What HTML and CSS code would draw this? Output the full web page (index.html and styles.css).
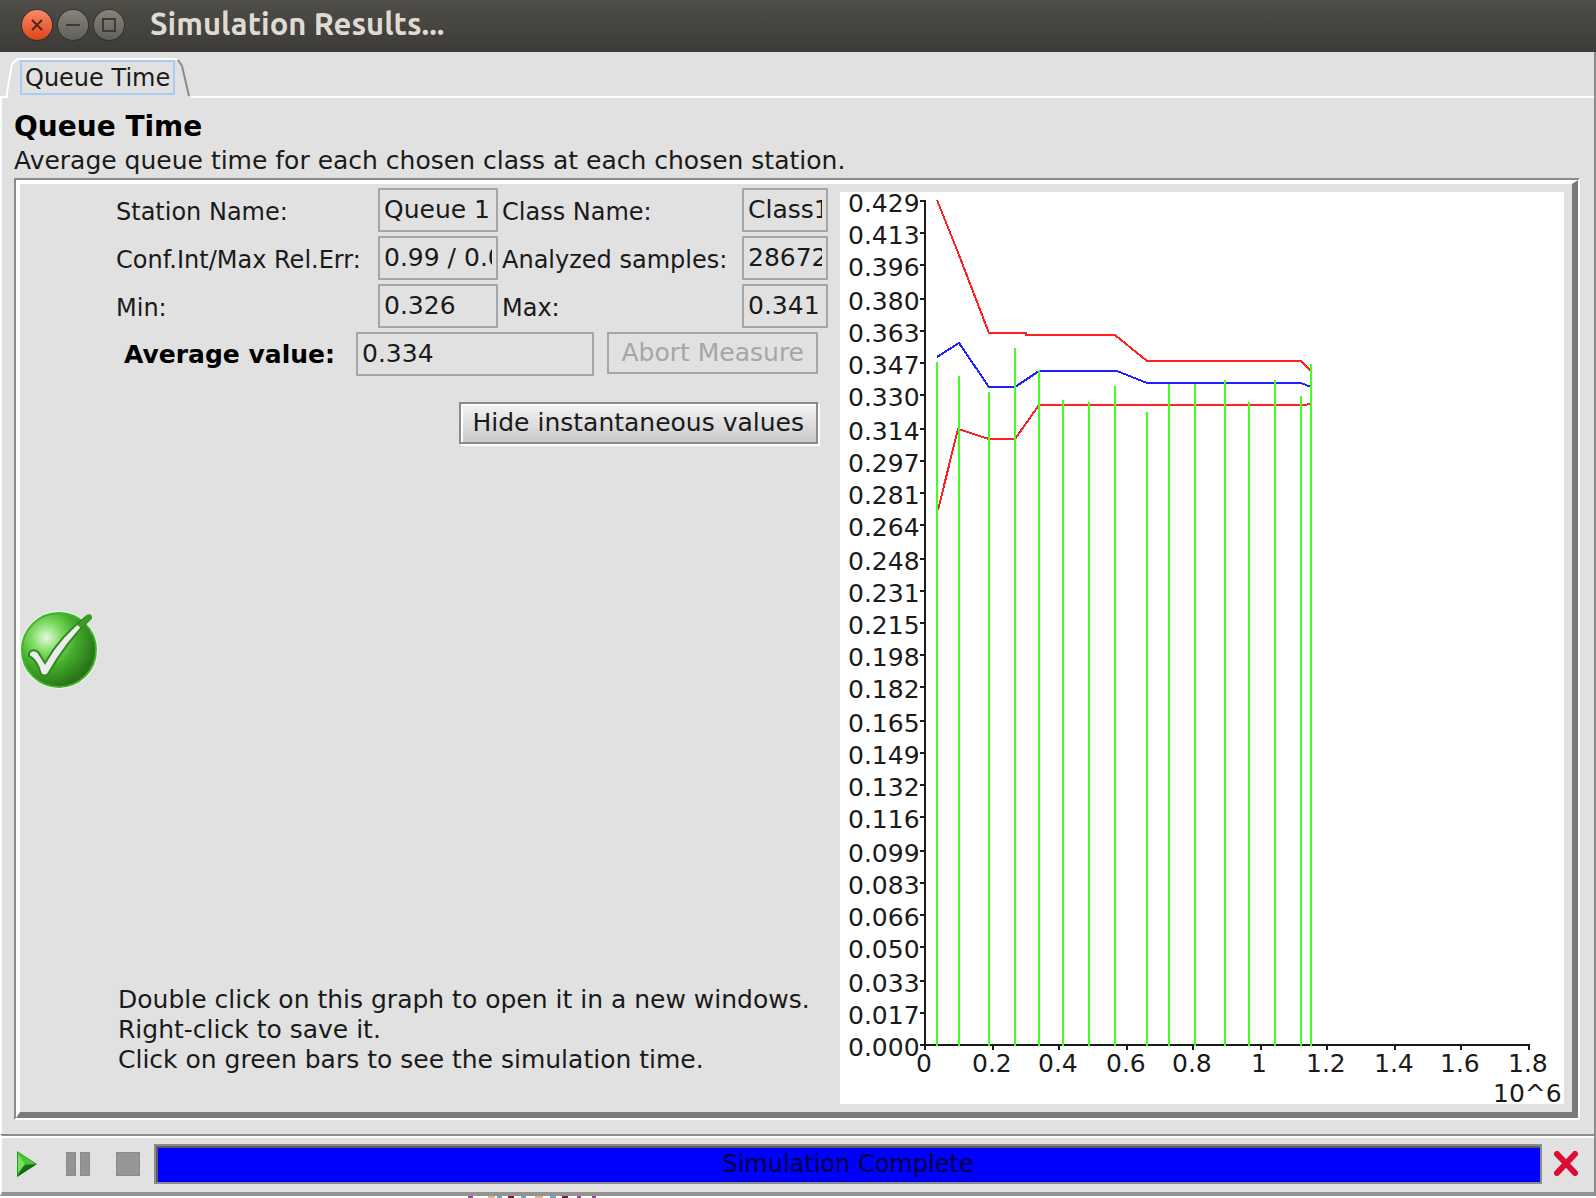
FILE: index.html
```html
<!DOCTYPE html>
<html lang="en">
<head>
<meta charset="utf-8">
<title>Simulation Results...</title>
<link rel="stylesheet" href="styles.css">
</head>
<body>
<div class="window">
  <header class="titlebar">
    <div class="window-buttons">
      <button class="wbtn wbtn-close" aria-label="Close"><svg viewBox="0 0 30 30"><path d="M10 10l10 10M20 10l-10 10"/></svg></button>
      <button class="wbtn" aria-label="Minimize"><svg viewBox="0 0 30 30"><path d="M8 15h14"/></svg></button>
      <button class="wbtn" aria-label="Maximize"><svg viewBox="0 0 30 30"><path d="M9 9h12v12h-12z"/></svg></button>
    </div>
    <h1 class="window-title">Simulation Results...</h1>
  </header>

  <nav class="tabs">
    <svg class="tab-edge tab-edge-left" viewBox="0 0 18 40" aria-hidden="true"><path d="M0 39h7V34L12 6L17 1H18"/></svg>
    <button class="tab"><span class="tab-label">Queue Time</span></button>
    <svg class="tab-edge tab-edge-right" viewBox="0 0 14 40" aria-hidden="true"><path d="M1 2L5 8L12 38"/></svg>
    <div class="tab-line"></div>
  </nav>

  <main class="page">
    <h2 class="heading">Queue Time</h2>
    <p class="subtitle">Average queue time for each chosen class at each chosen station.</p>

    <div class="scroll-frame">
      <section class="measure">
        <div class="status">
          <svg class="status-icon" viewBox="0 0 78 78" role="img" aria-label="Measure completed">
            <defs>
              <radialGradient id="ball" cx="0.33" cy="0.33" r="0.68">
                <stop offset="0" stop-color="#e4fbdc"/>
                <stop offset="0.3" stop-color="#7fda63"/>
                <stop offset="0.6" stop-color="#43ac2b"/>
                <stop offset="1" stop-color="#2a751a"/>
              </radialGradient>
            </defs>
            <circle cx="39" cy="39" r="39" fill="#f2f5f0"/>
            <circle cx="39" cy="39" r="37" fill="url(#ball)" stroke="#3fb52a" stroke-width="2"/>
            <path d="M9 42Q13 37 18 41L25 52Q40 25 67 5Q71 3 71 7Q47 30 28 63Q24 66 21 63Q17 49 9 45Z" fill="#ececec" stroke="#2f8a1f" stroke-width="2"/>
            <path d="M57 14L68 4Q72 3 71 8L61 17Z" fill="#3c9a2a"/>
          </svg>
        </div>

        <form class="details">
          <div class="fields">
            <label for="station">Station Name:</label>
            <input id="station" class="field" value="Queue 1" readonly>
            <label for="class">Class Name:</label>
            <input id="class" class="field" value="Class1" readonly>
            <label for="conf">Conf.Int/Max Rel.Err:</label>
            <input id="conf" class="field" value="0.99 / 0.03" readonly>
            <label for="samples">Analyzed samples:</label>
            <input id="samples" class="field" value="286720" readonly>
            <label for="min">Min:</label>
            <input id="min" class="field" value="0.326" readonly>
            <label for="max">Max:</label>
            <input id="max" class="field" value="0.341" readonly>
          </div>
          <div class="average">
            <label class="average-label" for="avg">Average value:</label>
            <input id="avg" class="field average-field" value="0.334" readonly>
            <button type="button" class="btn" disabled>Abort Measure</button>
          </div>
          <div class="toggle">
            <button type="button" class="btn btn-raised">Hide instantaneous values</button>
          </div>
          <p class="hint">Double click on this graph to open it in a new windows.<br>Right-click to save it.<br>Click on green bars to see the simulation time.</p>
        </form>

        <div class="chart">
          <svg class="plot" viewBox="0 0 724 912" role="img" aria-label="Queue time against simulation time">
            <g class="ylabels">
              <text x="8" y="20">0.429</text><text x="8" y="52">0.413</text><text x="8" y="84">0.396</text>
              <text x="8" y="118">0.380</text><text x="8" y="150">0.363</text><text x="8" y="182">0.347</text>
              <text x="8" y="214">0.330</text><text x="8" y="248">0.314</text><text x="8" y="280">0.297</text>
              <text x="8" y="312">0.281</text><text x="8" y="344">0.264</text><text x="8" y="378">0.248</text>
              <text x="8" y="410">0.231</text><text x="8" y="442">0.215</text><text x="8" y="474">0.198</text>
              <text x="8" y="506">0.182</text><text x="8" y="540">0.165</text><text x="8" y="572">0.149</text>
              <text x="8" y="604">0.132</text><text x="8" y="636">0.116</text><text x="8" y="670">0.099</text>
              <text x="8" y="702">0.083</text><text x="8" y="734">0.066</text><text x="8" y="766">0.050</text>
              <text x="8" y="800">0.033</text><text x="8" y="832">0.017</text><text x="8" y="864">0.000</text>
            </g>
            <g class="xlabels">
              <text x="76" y="880">0</text><text x="132" y="880">0.2</text><text x="198" y="880">0.4</text>
              <text x="266" y="880">0.6</text><text x="332" y="880">0.8</text><text x="411" y="880">1</text>
              <text x="466" y="880">1.2</text><text x="534" y="880">1.4</text><text x="600" y="880">1.6</text>
              <text x="668" y="880">1.8</text><text x="653" y="910">10^6</text>
            </g>
            <path class="axis" d="M85 8V854M80 853H690
              M80 9h6M80 41h6M80 73h6M80 107h6M80 139h6M80 171h6M80 203h6M80 237h6M80 269h6M80 301h6M80 333h6M80 367h6M80 399h6M80 431h6M80 463h6M80 495h6M80 529h6M80 561h6M80 593h6M80 625h6M80 659h6M80 691h6M80 723h6M80 755h6M80 789h6M80 821h6
              M85 853v5M153 853v5M219 853v5M287 853v5M353 853v5M421 853v5M487 853v5M555 853v5M621 853v5M689 853v5"/>
            <path class="bound" d="M97 8L119 63L149 141H186V143H275L307 169H461L471 179"/>
            <path class="bound" d="M98 318L118 237L149 247H175L199 213H466L471 211"/>
            <path class="mean" d="M97 165L119 151L149 195H175L199 179H277L307 191H461L471 195"/>
            <path class="bars" d="M97 170V854M119 184V854M149 200V854M175 156V854M199 178V854M223 208V854M249 210V854M275 194V854M307 220V854M329 192V854M355 192V854M385 188V854M409 210V854M435 188V854M461 204V854M471 172V854"/>
          </svg>
        </div>
      </section>
    </div>
  </main>

  <footer class="controls">
    <button class="tool" aria-label="Start">
      <svg viewBox="0 0 24 28"><path d="M1 1L21 14L1 27Z" fill="#2b9a1f"/><path d="M1 2L20 14L8 14Z" fill="#4cc43c"/><path d="M2 4L9 14L2 23Z" fill="#74e060"/><path d="M1 27L21 14L8 16Z" fill="#17690f"/></svg>
    </button>
    <button class="tool" aria-label="Pause" disabled>
      <svg viewBox="0 0 24 24"><path d="M0 0h10v24H0zM14 0h10v24H14z" fill="#8a8a8a"/><path d="M1 1h8v22H1zM15 1h8v22h-8z" fill="#949494"/></svg>
    </button>
    <button class="tool" aria-label="Stop" disabled>
      <svg viewBox="0 0 24 24"><path d="M0 0h24v24H0z" fill="#8a8a8a"/><path d="M1 1h22v22H1z" fill="#969696"/></svg>
    </button>
    <div class="progress" role="progressbar" aria-valuenow="100" aria-valuemin="0" aria-valuemax="100">Simulation Complete</div>
    <button class="tool tool-close" aria-label="Close results">
      <svg viewBox="0 0 24 26"><path d="M3 3L21 22M21 3L3 22" fill="none" stroke="#dc0d35" stroke-width="6" stroke-linecap="round"/></svg>
    </button>
  </footer>
</div>
<svg class="desktop-edge" viewBox="0 0 600 2" aria-hidden="true">
  <path d="M468 0h5v2h-5zM577 0h4v2h-4zM592 0h4v2h-4z" fill="#8a4f95"/>
  <path d="M508 0h6v2h-6zM562 0h6v2h-6z" fill="#6b2040"/>
  <path d="M488 0h7v2h-7zM535 0h8v2h-8z" fill="#d8b58a"/>
  <path d="M497 0h5v2h-5zM521 0h5v2h-5zM550 0h6v2h-6z" fill="#6aa5cc"/>
</svg>
</body>
</html>
```
FILE: styles.css
```css
* { box-sizing: border-box; }

html, body { height: 100%; }

body {
  margin: 0;
  background: #fff;
  color: #1a1a1a;
  font-family: "DejaVu Sans", sans-serif;
  font-size: 25px;
  line-height: 30px;
  overflow: hidden;
}

h1, h2, p { margin: 0; }

button, input {
  margin: 0;
  padding: 0;
  border: 0;
  background: none;
  color: inherit;
  font: inherit;
}

svg { display: block; }

.window {
  display: flex;
  flex-direction: column;
  height: calc(100vh - 2px);
  background: #e1e1e1;
  border-right: 2px solid #8b8b8b;
}

.desktop-edge { width: 600px; height: 2px; }

/* Title bar */
.titlebar {
  display: flex;
  align-items: center;
  gap: 26px;
  height: 52px;
  margin-right: -2px;
  padding: 0 22px 2px;
  background: linear-gradient(#4e4d47, #3c3b37);
}

.window-buttons { display: flex; gap: 6px; }

.wbtn {
  width: 30px;
  height: 30px;
  border-radius: 50%;
  background: linear-gradient(#858379, #605f59);
  box-shadow: 0 0 0 1px #33322e;
}

.wbtn-close { background: linear-gradient(#f68a68, #df4517); }

.wbtn svg { fill: none; stroke: #3b3a36; stroke-width: 2; }

.wbtn-close svg { stroke: #5a2413; }

.window-title {
  padding-bottom: 2px;
  color: #dfdbd2;
  font-family: Ubuntu, "Noto Sans", sans-serif;
  font-size: 31px;
  font-weight: 700;
}

/* Tabs */
.tabs {
  display: flex;
  align-items: flex-end;
  height: 46px;
  padding-top: 6px;
}

.tab-edge { flex: none; height: 40px; fill: none; stroke-width: 2; }

.tab-edge-left { width: 18px; stroke: #fff; }

.tab-edge-right { width: 14px; stroke: #8b8b8b; }

.tab {
  height: 40px;
  padding: 0 2px 4px;
  border-top: 2px solid #fff;
  font-size: 24px;
}

.tab-label {
  display: block;
  padding: 1px 3px 0;
  border: 2px solid #a9ccf0;
}

.tab-line { flex: 1; height: 2px; background: #fff; }

/* Page */
.page {
  display: flex;
  flex: 1;
  flex-direction: column;
  min-height: 0;
  padding: 12px 14px 14px 12px;
  border-left: 2px solid #fff;
}

.heading { font-size: 28px; line-height: 34px; color: #000; }

.subtitle { line-height: 34px; }

.scroll-frame {
  display: flex;
  flex: 1;
  min-height: 0;
  border: 2px solid;
  border-color: #8b8b8b #fff #fff #8b8b8b;
}

.measure {
  display: grid;
  flex: 1;
  grid-template-columns: 96px 712px minmax(0, 1fr);
  border-style: solid;
  border-width: 4px 6px 6px 4px;
  border-color: #fff #7a7a7a #7a7a7a #fff;
  min-height: 0;
}

.status { display: flex; align-items: center; padding-top: 4px; }

.status-icon { width: 78px; height: 78px; }

.details {
  display: flex;
  flex-direction: column;
  padding: 4px 0 37px;
  min-height: 0;
}

.fields {
  display: grid;
  grid-template-columns: 258px 120px 236px 86px;
  gap: 4px;
  align-items: center;
}

.fields label { padding-top: 3px; font-size: 24px; }

.field {
  width: 100%;
  height: 44px;
  padding: 0 4px 2px;
  border: 2px solid #a6a6a6;
}

.average { display: flex; align-items: flex-start; padding: 4px 10px 0 8px; }

.average-label { width: 232px; line-height: 46px; font-weight: 700; color: #000; }

.average-field { width: 238px; margin-right: auto; }

.btn {
  height: 42px;
  padding: 0 12px;
  border: 2px solid #a6a6a6;
}

.btn:disabled { color: #a6a6a6; }

.toggle { display: flex; justify-content: flex-end; padding: 24px 10px 0 0; }

.btn-raised {
  border-color: #8b8b8b;
  background: linear-gradient(#f4f4f4, #cacaca);
  box-shadow: inset 2px 2px #fff, 2px 2px #fff;
}

.hint { margin-top: auto; padding-left: 2px; }

/* Chart */
.chart { min-height: 0; margin: 8px 8px 8px 12px; background: #fff; }

.plot { width: 100%; height: 100%; shape-rendering: crispEdges; }

.plot text { fill: #1a1a1a; font-size: 25px; }

.plot path { fill: none; stroke-width: 2; }

.plot .axis { stroke: #1a1a1a; }

.plot .bound { stroke: #ff2020; }

.plot .mean { stroke: #2020ff; }

.plot .bars { stroke: #44ff22; }

/* Bottom tool bar */
.controls {
  display: flex;
  align-items: center;
  height: 62px;
  padding: 0 16px 0 14px;
  border-top: 2px solid #8b8b8b;
  border-bottom: 4px solid #959290;
  border-left: 2px solid #fff;
  box-shadow: inset 0 2px #fff;
}

.tool { width: 24px; margin-right: 26px; }

.tool:nth-of-type(3) { margin-right: 14px; }

.tool-close { margin: 0 0 0 12px; }

.progress {
  flex: 1;
  height: 40px;
  border: 2px solid #8b8b8b;
  background: #00f;
  box-shadow: inset 2px 2px #5c5c5c;
  color: #00003c;
  font-size: 24px;
  line-height: 36px;
  text-align: center;
}
```
